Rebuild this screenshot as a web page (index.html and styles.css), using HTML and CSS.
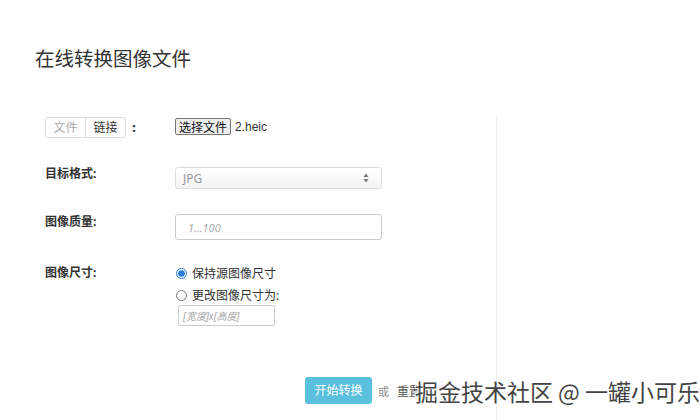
FILE: index.html
```html
<!DOCTYPE html>
<html lang="zh-CN">
<head>
  <meta charset="UTF-8" />
  <title>在线转换图像文件</title>
  <link rel="stylesheet" href="styles.css">
</head>
<body>

<div id="page">
  <h1>在线转换图像文件</h1>

  <div class="content">
    <form class="convert-form">
      <div class="row row-source">
        <div class="label">
          <span class="tabs">
            <span class="tab tab-off">文件</span>
            <span class="tab">链接</span>
          </span>
          <b class="colon">:</b>
        </div>
        <div class="field file-field">
          <span class="file-btn">选择文件</span>
          <span class="file-name">2.heic</span>
        </div>
      </div>

      <div class="row row-format">
        <div class="label">目标格式:</div>
        <div class="field">
          <div class="select">
            <span>JPG</span>
            <svg width="6" height="10" viewBox="0 0 6 10">
              <path d="M3 0.5 L5.5 4 H0.5 Z M3 9.5 L5.5 6 H0.5 Z" fill="#777"/>
            </svg>
          </div>
        </div>
      </div>

      <div class="row row-quality">
        <div class="label">图像质量:</div>
        <div class="field">
          <input class="text-input" type="text" placeholder="1...100">
        </div>
      </div>

      <div class="row row-size">
        <div class="label">图像尺寸:</div>
        <div class="field size-field">
          <label class="radio"><input type="radio" name="size" checked> 保持源图像尺寸</label>
          <label class="radio"><input type="radio" name="size"> 更改图像尺寸为:</label>
          <input class="size-input" type="text" placeholder="[宽度]x[高度]">
        </div>
      </div>

      <div class="actions">
        <span class="btn-start">开始转换</span>
        <span class="or">或</span>
        <a href="#" class="reset">重置</a>
      </div>
    </form>
  </div>
</div>

<div class="watermark">掘金技术社区 @ 一罐小可乐</div>

</body>
</html>
```

FILE: styles.css
```css
html, body {
  margin: 0;
  height: 100%;
  background: #fff;
  color: #333;
  font-family: 'Noto Sans', 'Noto Sans CJK SC', sans-serif;
  font-size: 12px;
  overflow: hidden;
}

#page {
  padding-left: 35px;
}

h1 {
  margin: 0;
  padding-top: 45px;
  font-size: 19.5px;
  line-height: 28px;
  font-weight: normal;
  color: #333;
}

.content {
  margin-top: 42px;
  padding-left: 10px;
  display: flex;
}

.convert-form {
  width: 452px;
  height: 320px;
  padding-top: 2px;
  border-right: 1px solid #eee;
  box-sizing: border-box;
}

.row {
  display: grid;
  grid-template-columns: 130px 1fr;
  align-items: start;
}

.row-source { height: 50px; }
.row-format { height: 47px; }
.row-quality { height: 52px; }
.row-size { height: 111px; }

.label {
  line-height: 16px;
  font-weight: bold;
  color: #333;
}

.row-format .label { margin-top: -1px; }
.row-size .label { margin-top: -1px; }

/* source tabs */
.tabs {
  display: inline-flex;
  border: 1px solid #ddd;
  border-radius: 3px;
  vertical-align: top;
}
.tab {
  width: 39px;
  height: 19px;
  line-height: 19px;
  text-align: center;
  font-weight: normal;
  color: #333;
}
.tab + .tab {
  border-left: 1px solid #ddd;
}
.tab-off {
  color: #aaa;
}
.colon {
  display: inline-block;
  margin-left: 3px;
  line-height: 21px;
}

.file-field {
  padding-top: 1px;
  display: flex;
  align-items: center;
  font-family: 'Liberation Sans', 'Noto Sans CJK SC', sans-serif;
}
.file-btn {
  display: inline-block;
  height: 15px;
  line-height: 15px;
  padding: 0 3px;
  border: 1px solid #767676;
  border-radius: 2px;
  background: #efefef;
  color: #111;
  font-size: 12px;
  font-family: 'Noto Sans CJK SC', sans-serif;
}
.file-name {
  margin-left: 4px;
  font-size: 12px;
  color: #333;
}

/* select */
.select {
  width: 207px;
  height: 22px;
  box-sizing: border-box;
  border: 1px solid #ddd;
  border-radius: 3px;
  background: linear-gradient(#fff, #f4f4f4);
  display: flex;
  align-items: center;
  justify-content: space-between;
  padding: 0 12px 0 7px;
  color: #999;
  font-size: 12px;
}

.text-input {
  width: 207px;
  height: 26px;
  box-sizing: border-box;
  border: 1px solid #ccc;
  border-radius: 3px;
  padding: 0 12px;
  font-family: inherit;
  font-size: 11px;
  outline: none;
}
.text-input::placeholder,
.size-input::placeholder {
  color: #aaa;
  font-style: italic;
}

.size-field {
  margin-top: -4px;
}
.radio {
  display: flex;
  align-items: center;
  height: 22px;
  color: #333;
  font-size: 12px;
}
.radio input {
  width: 11px;
  height: 11px;
  margin: 0 5px 0 1px;
  accent-color: #2a7ae2;
}
.size-input {
  display: block;
  width: 97px;
  height: 21px;
  box-sizing: border-box;
  margin-left: 3px;
  margin-top: -1px;
  border: 1px solid #ccc;
  border-radius: 2px;
  padding: 0 4px;
  font-family: inherit;
  font-size: 10px;
  outline: none;
}

/* actions */
.actions {
  display: flex;
  align-items: center;
  padding-left: 260px;
}
.btn-start {
  display: inline-block;
  width: 67px;
  height: 27px;
  line-height: 27px;
  text-align: center;
  background: #5bc0de;
  border-radius: 3px;
  color: #fff;
  font-size: 12px;
}
.or {
  margin-left: 6px;
  color: #888;
  font-size: 11px;
}
.reset {
  margin-left: 8px;
  color: #555;
  font-size: 12px;
  text-decoration: none;
}

.watermark {
  position: absolute;
  right: 0;
  bottom: 15px;
  font-size: 23px;
  line-height: 28px;
  color: #444;
  white-space: nowrap;
  font-family: 'Noto Sans CJK SC', sans-serif;
  text-shadow: 1px 1px 0 #fff, -1px -1px 0 #fff, 1px -1px 0 #fff, -1px 1px 0 #fff;
}
```
